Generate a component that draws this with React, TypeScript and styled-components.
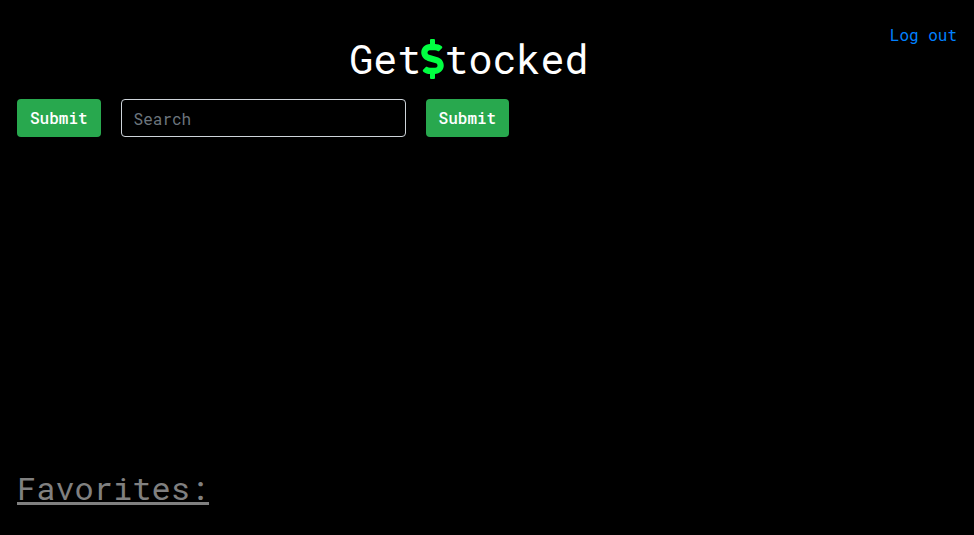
import React from "react";
import styled, { createGlobalStyle } from "styled-components";
import { FaDollarSign } from "react-icons/fa";

const GlobalStyle = createGlobalStyle`
  *, *::before, *::after { box-sizing: border-box; }
  body {
    margin: 0;
    background: #000;
    color: #fff;
    font-family: "Roboto Mono", "DejaVu Sans Mono", monospace;
    font-size: 16px;
    line-height: 24px;
  }
`;

const Page = styled.div`
  display: flex;
  flex-direction: column;
  min-height: 100vh;
  padding: 23px 17px 25px;
`;

const Header = styled.header`
  display: flex;
  align-items: flex-start;
`;

const Title = styled.h1`
  flex: 1;
  margin: 12px 0 0;
  padding-left: 31px;
  text-align: center;
  font-size: 40px;
  font-weight: 450;
  line-height: 48px;
`;

const Dollar = styled(FaDollarSign)`
  width: 23px;
  height: 40px;
  color: #00ff41;
  vertical-align: -5px;
`;

const LogOut = styled.a`
  color: #0080ff;
  text-decoration: none;
`;

const Controls = styled.form`
  display: flex;
  gap: 20px;
  margin-top: 16px;
`;

const SubmitButton = styled.button`
  height: 38px;
  padding: 0 13px;
  border: 0;
  border-radius: 4px;
  background: #28a84e;
  color: #fff;
  font: inherit;
  font-weight: 500;
`;

const SearchInput = styled.input`
  width: 285px;
  height: 38px;
  padding: 6px 12px;
  border: 1px solid #ced4da;
  border-radius: 4px;
  background: #000;
  color: #fff;
  font: inherit;
  &::placeholder { color: #6c757d; opacity: 1; }
`;

const Favorites = styled.h2`
  margin: auto 0 0;
  color: #808080;
  font-size: 32px;
  font-weight: 400;
  line-height: 44px;
  text-decoration: underline;
  text-decoration-thickness: 3px;
`;

export default function App() {
  return (
    <Page>
      <GlobalStyle />
      <Header>
        <Title>Get<Dollar role="img" aria-label="S" />tocked</Title>
        <LogOut href="#">Log out</LogOut>
      </Header>
      <Controls onSubmit={(event) => event.preventDefault()}>
        <SubmitButton type="submit">Submit</SubmitButton>
        <SearchInput type="text" placeholder="Search" aria-label="Search" />
        <SubmitButton type="submit">Submit</SubmitButton>
      </Controls>
      <Favorites>Favorites:</Favorites>
    </Page>
  );
}
